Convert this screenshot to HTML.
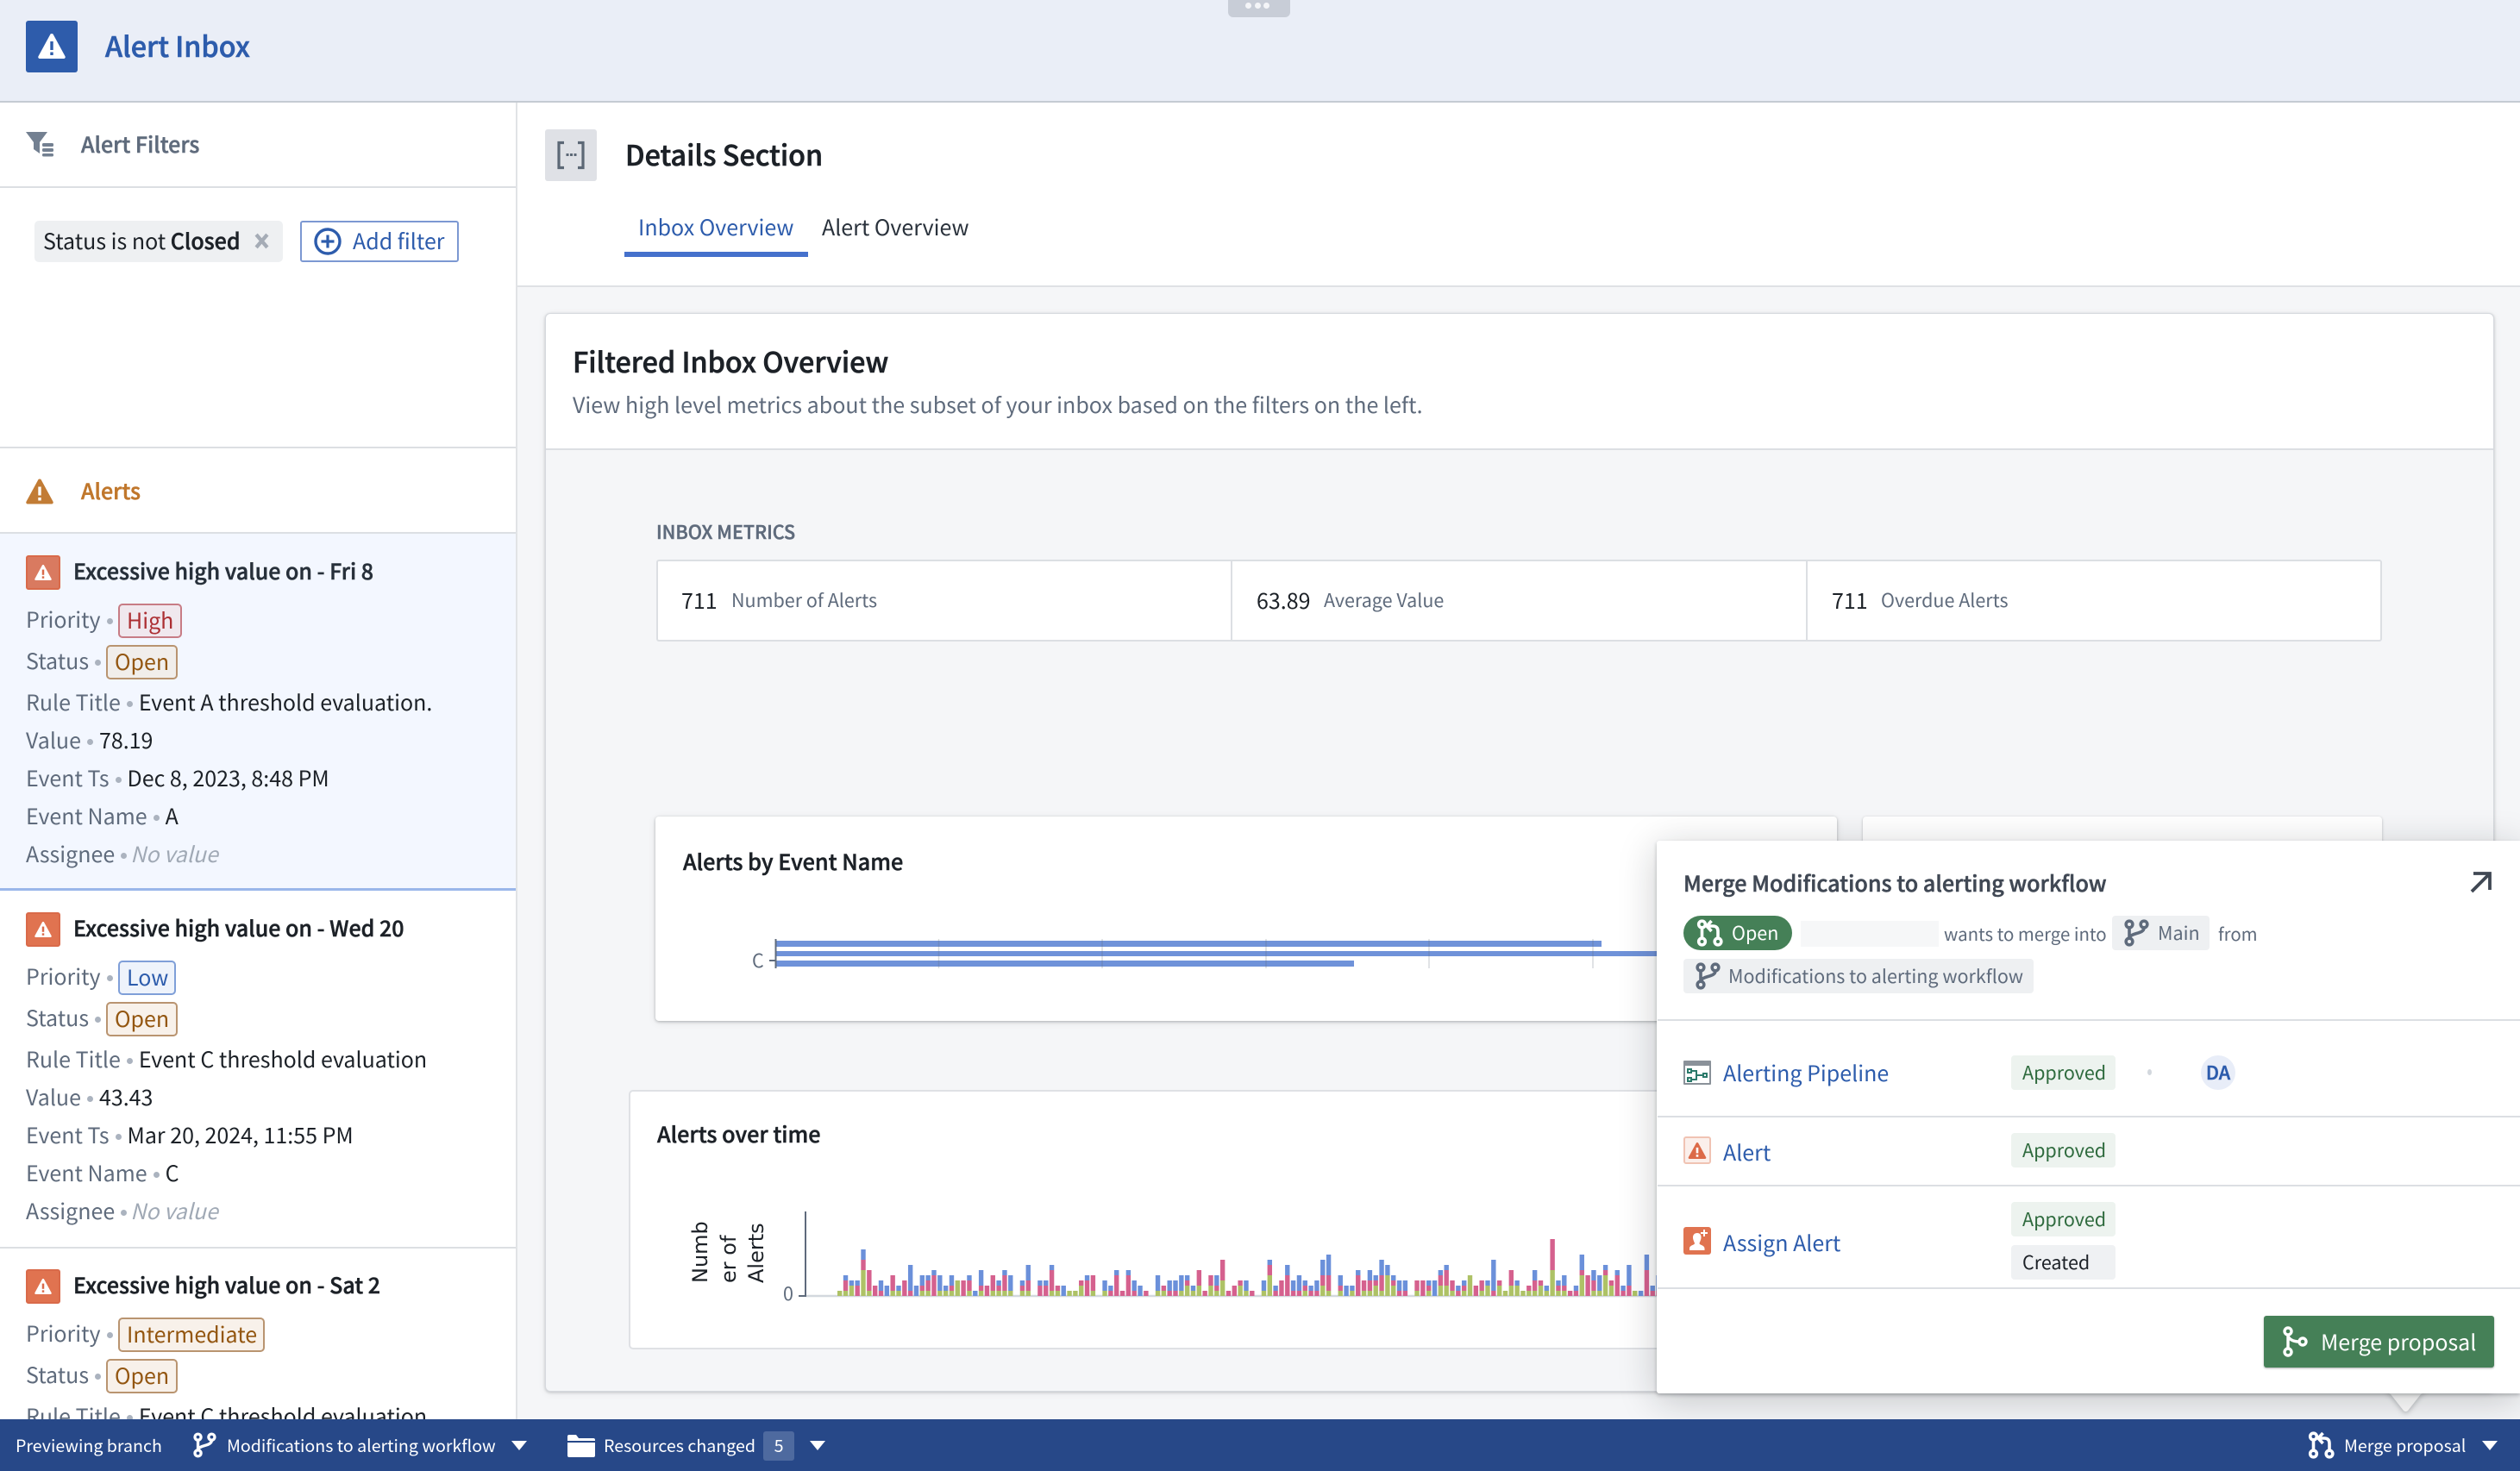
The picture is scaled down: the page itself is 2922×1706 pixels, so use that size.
<!DOCTYPE html>
<html><head><meta charset="utf-8"><title>Alert Inbox</title>
<style>
*{box-sizing:border-box}
html,body{margin:0;padding:0;width:2922px;height:1706px;overflow:hidden;background:#fff}
body{position:relative;font-family:"Noto Sans CJK JP","Liberation Sans",sans-serif;color:#1c2127;font-size:25px}
.a{position:absolute}
.t{position:absolute;white-space:nowrap;line-height:40px;height:40px;margin-top:-1px}
.s{font-size:21.500px}
.x{font-size:20.400px}
.b{font-size:19.600px}
.m{font-weight:500;-webkit-text-stroke:.5px currentColor}
.h{font-size:32.300px;font-weight:500;-webkit-text-stroke:.6px currentColor}
.l{color:#5f6b7c}
.d{display:inline-block;width:7px;height:7px;border-radius:50%;background:#abb3bf;margin:0 7px;vertical-align:4px}
.n{margin-left:-3px;color:#a0a9b5}
.tag{position:absolute;height:40px;border:2px solid;border-radius:5px;line-height:35px;padding-left:8px;white-space:nowrap}
.hi{color:#ac2f33;border-color:#c77c85;background:#f0e8ee}
.op{color:#935610;border-color:#b99470;background:#f8f1ea}
.lo{color:#2d5cac;border-color:#7f9fd8;background:#eef3fb}
.chip{position:absolute;height:40px;background:#eef0f2;border-radius:4px}
.ap{position:absolute;left:2332px;width:121px;height:40px;background:#edf3ef;color:#2f6b3e;font-size:21.500px;line-height:39px;padding-left:13px;border-radius:4px}
.hr{position:absolute;height:2px;background:#dcdfe3}
svg{position:absolute;overflow:visible}
</style></head><body>

<!-- header -->
<div class="a" style="left:0;top:0;width:2922px;height:119px;background:#eaeef7;border-bottom:2px solid #c5cbd3"></div>
<div class="a" style="left:1424px;top:0;width:72px;height:20px;background:#c8cdd7;border-radius:0 0 6px 6px"></div>
<div class="a" style="left:1444px;top:3px;width:7px;height:7px;background:#f4f5f8;border-radius:50%"></div>
<div class="a" style="left:1455px;top:3px;width:7px;height:7px;background:#f4f5f8;border-radius:50%"></div>
<div class="a" style="left:1465px;top:3px;width:7px;height:7px;background:#f4f5f8;border-radius:50%"></div>
<div class="a" style="left:30px;top:24px;width:60px;height:60px;background:#2e5cab;border-radius:3px"></div>
<svg style="left:44px;top:39px" width="32" height="29" viewBox="0 0 32 29"><path d="M16 0c.8 0 1.5.4 1.9 1.2l13.6 25c.7 1.3-.2 2.8-1.7 2.8H2.200C.7 29-.2 27.500.5 26.200l13.600-25C14.500.4 15.200 0 16 0z" fill="#fff"/><rect x="14.300" y="9" width="3.400" height="10" fill="#2e5cab"/><rect x="14.300" y="21.500" width="3.400" height="3.500" fill="#2e5cab"/></svg>
<div class="t h" style="left:122px;top:34px;color:#2d5cac">Alert Inbox</div>

<!-- sidebar -->
<div class="a" style="left:598px;top:119px;width:2px;height:1530px;background:#e1e3e6"></div>
<svg style="left:30px;top:153px" width="32" height="28" viewBox="0 0 32 28"><path d="M0 0h25l-9 12v13l-7-5v-8z" fill="#738091"/><rect x="19" y="13" width="13" height="4" rx="1.500" fill="#738091"/><rect x="19" y="19" width="13" height="4" rx="1.500" fill="#738091"/><rect x="19" y="25" width="13" height="3.500" rx="1.500" fill="#738091"/></svg>
<div class="t m" style="left:94px;top:148px;color:#5f6b7c">Alert Filters</div>
<div class="hr" style="left:0;top:216px;width:598px"></div>
<div class="a" style="left:40px;top:256px;width:288px;height:48px;background:#eef0f2;border-radius:5px"></div>
<div class="t" style="left:50px;top:260px">Status is not <span class="m">Closed</span></div>
<svg style="left:295px;top:271px" width="17" height="17" viewBox="0 0 16 16"><path d="M2 1l12 14M14 1L2 15" stroke="#a5acb6" stroke-width="4" fill="none"/></svg>
<div class="a" style="left:348px;top:256px;width:184px;height:48px;border:2px solid #7c98d2;border-radius:3px;background:#fff"></div>
<svg style="left:364px;top:264px" width="32" height="32" viewBox="0 0 32 32"><circle cx="16" cy="16" r="14" fill="none" stroke="#2d5cac" stroke-width="3.400"/><path d="M16 8.500v15M8.500 16h15" stroke="#2d5cac" stroke-width="3.200"/></svg>
<div class="t" style="left:409px;top:260px;color:#2d5cac">Add filter</div>
<div class="hr" style="left:0;top:518px;width:598px"></div>
<svg style="left:30px;top:555px" width="32" height="30" viewBox="0 0 32 29"><path d="M16 0c.8 0 1.500.4 1.900 1.200l13.600 25c.7 1.300-.2 2.800-1.700 2.800H2.200C.7 29-.2 27.500.5 26.200l13.600-25C14.500.4 15.200 0 16 0z" fill="#c27c35"/><rect x="14.300" y="9" width="3.400" height="10" fill="#fff"/><rect x="14.300" y="21.500" width="3.400" height="3.500" fill="#fff"/></svg>
<div class="t m" style="left:94px;top:550px;color:#c0772c">Alerts</div>
<div class="hr" style="left:0;top:617px;width:598px"></div>

<!-- item 1 -->
<div class="a" style="left:0;top:619px;width:598px;height:411px;background:#f3f7ff"></div>
<div class="a" style="left:0;top:1030px;width:598px;height:3px;background:#9ab6ea"></div>
<div class="a" style="left:30px;top:644px;width:40px;height:40px;background:#d97a60;border:2px solid #d96a4a;border-radius:3px"></div>
<svg style="left:40px;top:655px" width="20" height="18" viewBox="0 0 32 29"><path d="M16 0c.8 0 1.500.4 1.900 1.200l13.600 25c.7 1.300-.2 2.800-1.700 2.800H2.200C.7 29-.2 27.500.5 26.200l13.600-25C14.500.4 15.200 0 16 0z" fill="#fff"/><rect x="14" y="9" width="4" height="10" fill="#d96a4a"/><rect x="14" y="21.500" width="4" height="4" fill="#d96a4a"/></svg>
<div class="t m" style="left:85px;top:643px;color:#27303a">Excessive high value on - Fri 8</div>
<div class="t l" style="left:30px;top:699px">Priority<b class="d"></b></div>
<div class="tag hi" style="left:137px;top:700px;width:74px">High</div>
<div class="t l" style="left:30px;top:747px">Status<b class="d"></b></div>
<div class="tag op" style="left:123px;top:748px;width:83px;background:#f1eeeb">Open</div>
<div class="t" style="left:30px;top:795px"><span class="l">Rule Title</span><b class="d"></b>Event A threshold evaluation.</div>
<div class="t" style="left:30px;top:839px"><span class="l">Value</span><b class="d"></b>78.19</div>
<div class="t" style="left:30px;top:883px"><span class="l">Event Ts</span><b class="d"></b>Dec 8, 2023, 8:48 PM</div>
<div class="t" style="left:30px;top:927px"><span class="l">Event Name</span><b class="d"></b>A</div>
<div class="t" style="left:30px;top:971px"><span class="l">Assignee</span><b class="d"></b><i class="n">No value</i></div>

<!-- item 2 -->
<div class="a" style="left:30px;top:1058px;width:40px;height:40px;background:#e07350;border:2px solid #d96a4a;border-radius:3px"></div>
<svg style="left:40px;top:1069px" width="20" height="18" viewBox="0 0 32 29"><path d="M16 0c.8 0 1.500.4 1.900 1.200l13.600 25c.7 1.300-.2 2.800-1.700 2.800H2.200C.7 29-.2 27.500.5 26.200l13.600-25C14.500.4 15.200 0 16 0z" fill="#fff"/><rect x="14" y="9" width="4" height="10" fill="#d96a4a"/><rect x="14" y="21.500" width="4" height="4" fill="#d96a4a"/></svg>
<div class="t m" style="left:85px;top:1057px">Excessive high value on - Wed 20</div>
<div class="t l" style="left:30px;top:1113px">Priority<b class="d"></b></div>
<div class="tag lo" style="left:137px;top:1114px;width:67px">Low</div>
<div class="t l" style="left:30px;top:1161px">Status<b class="d"></b></div>
<div class="tag op" style="left:123px;top:1162px;width:83px">Open</div>
<div class="t" style="left:30px;top:1209px"><span class="l">Rule Title</span><b class="d"></b>Event C threshold evaluation</div>
<div class="t" style="left:30px;top:1253px"><span class="l">Value</span><b class="d"></b>43.43</div>
<div class="t" style="left:30px;top:1297px"><span class="l">Event Ts</span><b class="d"></b>Mar 20, 2024, 11:55 PM</div>
<div class="t" style="left:30px;top:1341px"><span class="l">Event Name</span><b class="d"></b>C</div>
<div class="t" style="left:30px;top:1385px"><span class="l">Assignee</span><b class="d"></b><i class="n">No value</i></div>
<div class="hr" style="left:0;top:1446px;width:598px"></div>

<!-- item 3 -->
<div class="a" style="left:30px;top:1472px;width:40px;height:40px;background:#e07350;border:2px solid #d96a4a;border-radius:3px"></div>
<svg style="left:40px;top:1483px" width="20" height="18" viewBox="0 0 32 29"><path d="M16 0c.8 0 1.500.4 1.900 1.200l13.600 25c.7 1.300-.2 2.800-1.700 2.800H2.200C.7 29-.2 27.500.5 26.200l13.600-25C14.500.4 15.200 0 16 0z" fill="#fff"/><rect x="14" y="9" width="4" height="10" fill="#d96a4a"/><rect x="14" y="21.500" width="4" height="4" fill="#d96a4a"/></svg>
<div class="t m" style="left:85px;top:1471px">Excessive high value on - Sat 2</div>
<div class="t l" style="left:30px;top:1527px">Priority<b class="d"></b></div>
<div class="tag op" style="left:137px;top:1528px;width:170px">Intermediate</div>
<div class="t l" style="left:30px;top:1575px">Status<b class="d"></b></div>
<div class="tag op" style="left:123px;top:1576px;width:83px">Open</div>
<div class="t" style="left:30px;top:1623px"><span class="l">Rule Title</span><b class="d"></b>Event C threshold evaluation</div>

<!-- details header -->
<div class="a" style="left:632px;top:150px;width:60px;height:60px;background:#dfe1e6;border-radius:3px"></div>
<svg style="left:646px;top:164px" width="32" height="32" viewBox="0 0 32 32" fill="none"><path d="M8 1.500H2v29h6M24 1.500h6v29h-6" stroke="#5c6876" stroke-width="3.200"/><rect x="10.500" y="14" width="3" height="3" fill="#5c6876"/><rect x="15" y="14" width="3" height="3" fill="#5c6876"/><rect x="19.500" y="14" width="3" height="3" fill="#5c6876"/></svg>
<div class="t h" style="left:725px;top:160px">Details Section</div>
<div class="t" style="left:740px;top:244px;color:#2d5cac">Inbox Overview</div>
<div class="t" style="left:953px;top:244px;color:#2a323c">Alert Overview</div>
<div class="a" style="left:724px;top:292px;width:213px;height:6px;background:#4571cc"></div>

<!-- main bg -->
<div class="a" style="left:600px;top:331px;width:2322px;height:1320px;background:#f5f6f8;border-top:2px solid #dfe1e5"></div>

<!-- big card -->
<div class="a" style="left:632px;top:363px;width:2260px;height:1251px;background:#f5f6f8;border-radius:6px;border:1px solid #d6d9de;box-shadow:0 1px 3px rgba(16,22,26,.2),0 2px 10px rgba(16,22,26,.06)"></div>
<div class="a" style="left:633px;top:364px;width:2258px;height:158px;background:#fff;border-radius:6px 6px 0 0;border-bottom:2px solid #dcdfe3"></div>
<div class="t h" style="left:664px;top:400px">Filtered Inbox Overview</div>
<div class="t" style="left:664px;top:450px;color:#5f6b7c;font-size:25.050px">View high level metrics about the subset of your inbox based on the filters on the left.</div>

<div class="t s m" style="left:761px;top:598px;color:#5f6b7c">INBOX METRICS</div>
<div class="a" style="left:761px;top:649px;width:2001px;height:95px;background:#fff;border:2px solid #dcdfe3;border-radius:3px"></div>
<div class="a" style="left:1427px;top:650px;width:2px;height:93px;background:#dcdfe3"></div>
<div class="a" style="left:2094px;top:650px;width:2px;height:93px;background:#dcdfe3"></div>
<div class="t" style="left:790px;top:677px">711</div>
<div class="t s l" style="left:848px;top:677px">Number of Alerts</div>
<div class="t" style="left:1457px;top:677px">63.89</div>
<div class="t s l" style="left:1535px;top:677px">Average Value</div>
<div class="t" style="left:2124px;top:677px">711</div>
<div class="t s l" style="left:2181px;top:677px">Overdue Alerts</div>

<!-- alerts by event -->
<div class="a" style="left:2160px;top:947px;width:602px;height:237px;background:#fff;border-radius:4px;box-shadow:0 1px 3px rgba(16,22,26,.25)"></div>
<div class="a" style="left:760px;top:947px;width:1370px;height:237px;background:#fff;border-radius:4px;box-shadow:0 1px 3px rgba(16,22,26,.28),0 2px 10px rgba(16,22,26,.08)"></div>
<div class="t m" style="left:792px;top:980px;font-size:25.200px">Alerts by Event Name</div>
<svg style="left:0;top:0" width="2922" height="1706">
<g fill="#6a8ed8" fill-opacity=".97"><rect x="900" y="1091" width="957" height="7"/><rect x="900" y="1103" width="1030" height="6"/><rect x="900" y="1114" width="670" height="7"/></g>
<g stroke="#5f6b7c" stroke-opacity=".25" stroke-width="1.500"><path d="M1088.500 1089v34M1278 1089v34M1468 1089v34M1657 1089v34M1847 1089v34"/></g>
<path d="M899.500 1089v34M892 1114h8" stroke="#5f6b7c" stroke-width="2"/>
</svg>
<div class="t s l" style="left:872px;top:1095px">C</div>

<!-- alerts over time -->
<div class="a" style="left:729px;top:1264px;width:1300px;height:301px;background:#fff;border:2px solid #dfe1e5;border-radius:5px"></div>
<div class="t m" style="left:762px;top:1296px;font-size:25.200px">Alerts over time</div>
<svg id="bars" style="left:0;top:0" width="2922" height="1706">
<path d="M934 1503h1000" stroke="#d3d8de" stroke-width="2.500"/>
<path d="M934 1405v99M926 1503h8" stroke="#5f6b7c" stroke-width="2"/>
<g font-family="'DejaVu Sans',sans-serif" font-size="24" fill="#1c2127">
<text transform="translate(820,1488) rotate(-90)">Numb</text>
<text transform="translate(853,1488) rotate(-90)">er of</text>
<text transform="translate(885,1488) rotate(-90)">Alerts</text>
</g>
</svg>
<div class="t s l" style="left:908px;top:1481px">0</div>
<script>
(function(){var d="100 121 201 021 522 140 020 012 002 130 101 030 015 002 112 121 041 103 101 112 300 030 121 001 113 020 130 111 131 103 000 111 123 000 021 021 141 110 002 100 100 210 031 130 000 102 011 041 010 041 012 002 010 000 103 110 012 012 103 211 101 230 010 220 112 340 010 020 210 102 010 000 102 421 011 030 042 012 013 111 011 012 223 134 000 112 002 101 041 120 122 211 133 402 211 012 012 000 120 030 111 003 221 231 120 011 111 400 020 120 201 016 210 100 230 201 100 110 122 210 101 560 111 112 010 011 413 040 122 103 411 210 041 011 024 100 001 053 011 013".split(" ");
var c=["#aec266","#d5618e","#6b90da"],s="";
d.forEach(function(v,i){var x=971+i*6.83,y=1503;for(var k=0;k<3;k++){var h=+v[k]*6;if(h){y-=h;s+='<rect x="'+x.toFixed(2)+'" y="'+y+'" width="5.400" height="'+h+'" fill="'+c[k]+'"/>';}}});
var e=document.getElementById("bars");e.insertAdjacentHTML("beforeend",s);})();
</script>

<!-- merge panel -->
<svg style="left:2766px;top:1614px;filter:drop-shadow(0 2px 3px rgba(16,22,26,.25));z-index:4" width="47" height="24" viewBox="0 0 47 24"><path d="M0 0h47l-6 3-15 19q-2.500 2-5 0L6 3z" fill="#fff"/></svg>
<div class="a" style="left:1921px;top:975px;width:1001px;height:641px;background:#fff;border-radius:3px 0 0 3px;box-shadow:0 2px 4px rgba(16,22,26,.25),0 8px 44px rgba(16,22,26,.22);z-index:5"></div>
<div class="a" style="left:0;top:0;width:2922px;height:1706px;z-index:6;pointer-events:none">
<div class="t m" style="left:1952px;top:1005px;color:#404854;font-size:25.150px">Merge Modifications to alerting workflow</div>
<svg style="left:2865px;top:1010px" width="24" height="24" viewBox="0 0 24 24" fill="none"><path d="M3 3h19v19M22 3L1 24" stroke="#404854" stroke-width="3.800"/></svg>

<div class="a" style="left:1952px;top:1062px;width:126px;height:40px;background:#458057;border-radius:20px"></div>
<svg style="left:1967px;top:1066px" width="32" height="32" viewBox="0 0 32 32" fill="none" stroke="#fff" stroke-width="3.600"><circle cx="6.500" cy="6" r="3.800"/><circle cx="6.500" cy="26" r="3.800"/><circle cx="25" cy="26" r="3.800"/><path d="M6.500 10v12M25 22v-8c0-4-2-6-6-6h-6M17.500 2l-5.500 6 5.500 6"/></svg>
<div class="t s" style="left:2008px;top:1063px;color:#fff">Open</div>
<div class="a" style="left:2088px;top:1068px;width:160px;height:30px;background:#f6f7f8"></div>
<div class="t x l" style="left:2254px;top:1063px">wants to merge into</div>
<div class="chip" style="left:2449px;top:1062px;width:113px"></div>
<svg style="left:2462px;top:1066px" width="30" height="32" viewBox="0 0 30 32" fill="none" stroke="#5f6b7c" stroke-width="3.600"><circle cx="7" cy="6" r="3.800"/><circle cx="7" cy="26" r="3.800"/><circle cx="24" cy="6" r="3.800"/><path d="M7 10v12M24 10c0 8-17 5-17 13"/></svg>
<div class="t s l" style="left:2502px;top:1063px">Main</div>
<div class="t x l" style="left:2572px;top:1063px">from</div>
<div class="chip" style="left:1952px;top:1112px;width:406px"></div>
<svg style="left:1965px;top:1116px" width="30" height="32" viewBox="0 0 30 32" fill="none" stroke="#5f6b7c" stroke-width="3.600"><circle cx="7" cy="6" r="3.800"/><circle cx="7" cy="26" r="3.800"/><circle cx="24" cy="6" r="3.800"/><path d="M7 10v12M24 10c0 8-17 5-17 13"/></svg>
<div class="t s l" style="left:2004px;top:1113px">Modifications to alerting workflow</div>
<div class="hr" style="left:1922px;top:1182px;width:1000px"></div>

<div class="a" style="left:1952px;top:1230px;width:32px;height:28px;background:#fff;border:2px solid #8a9199;border-top-width:6px;border-radius:1px"></div>
<svg style="left:1955px;top:1238px" width="26" height="18" viewBox="0 0 26 18" fill="none" stroke="#2b7a6b" stroke-width="2"><rect x="2" y="2" width="4" height="4"/><rect x="2" y="12" width="4" height="4"/><rect x="20" y="7" width="4" height="4"/><path d="M6 4h6v10H6M12 9h8"/></svg>
<div class="t" style="left:1998px;top:1225px;color:#2d5cac">Alerting Pipeline</div>
<div class="ap" style="top:1224px">Approved</div>
<div class="a" style="left:2490px;top:1240px;width:5px;height:7px;background:#d3d8de;border-radius:50%"></div>
<div class="a m" style="left:2552px;top:1224px;width:40px;height:40px;background:#e8edf8;border-radius:50%;text-align:center;font-size:21.500px;line-height:39px;color:#2d5cac">DA</div>
<div class="hr" style="left:1922px;top:1294px;width:1000px"></div>

<div class="a" style="left:1952px;top:1318px;width:32px;height:32px;background:#fbefeb;border:2px solid #f0c3b3;border-radius:3px"></div>
<svg style="left:1957px;top:1325px" width="22" height="19" viewBox="0 0 32 29"><path d="M16 0c.8 0 1.500.4 1.900 1.200l13.600 25c.7 1.300-.2 2.800-1.700 2.800H2.200C.7 29-.2 27.500.5 26.200l13.600-25C14.500.4 15.200 0 16 0z" fill="#dc6a48"/><rect x="14" y="9" width="4" height="10" fill="#fff"/><rect x="14" y="21.500" width="4" height="4" fill="#fff"/></svg>
<div class="t" style="left:1998px;top:1317px;color:#2d5cac">Alert</div>
<div class="ap" style="top:1314px">Approved</div>
<div class="hr" style="left:1922px;top:1374px;width:1000px"></div>

<div class="a" style="left:1952px;top:1423px;width:32px;height:32px;background:#e07350;border-radius:3px"></div>
<svg style="left:1955px;top:1426px" width="26" height="26" viewBox="0 0 26 26" fill="#fff"><path d="M13 4c3 0 4.500 2 4.500 5 0 3-1.500 5-2 7 0 2 6 2 6 6v2H4v-2c0-4 6-4 6-6-.5-2-2-4-2-7 0-3 2-5 5-5z"/><path d="M20 0h2v3h3v2h-3v3h-2V5h-3V3h3z"/></svg>
<div class="t" style="left:1998px;top:1422px;color:#2d5cac">Assign Alert</div>
<div class="ap" style="top:1394px">Approved</div>
<div class="ap" style="top:1444px;background:#eff1f3;color:#1c2127">Created</div>
<div class="hr" style="left:1922px;top:1493px;width:1000px"></div>

<div class="a" style="left:2625px;top:1526px;width:267px;height:60px;background:#458057;border-radius:3px;box-shadow:0 1px 2px rgba(16,22,26,.35)"></div>
<svg style="left:2646px;top:1538px" width="30" height="36" viewBox="0 0 30 36" fill="none" stroke="#fff" stroke-width="3.400"><circle cx="7" cy="6" r="4"/><circle cx="7" cy="30" r="4"/><circle cx="24" cy="18" r="4"/><path d="M7 10v16M7 10c0 5 6 8 13 8"/></svg>
<div class="t" style="left:2691px;top:1537px;color:#fff">Merge proposal</div>
</div>

<!-- bottom bar -->
<div class="a" style="left:0;top:1646px;width:2922px;height:60px;background:#274888;z-index:7"></div>
<div class="a" style="left:0;top:0;width:2922px;height:1706px;z-index:8;color:#fff">
<div class="t b" style="left:18px;top:1657px">Previewing branch</div>
<svg style="left:223px;top:1660px" width="28" height="32" viewBox="0 0 30 32" fill="none" stroke="#fff" stroke-width="3.600"><circle cx="7" cy="6" r="3.800"/><circle cx="7" cy="26" r="3.800"/><circle cx="24" cy="6" r="3.800"/><path d="M7 10v12M24 10c0 8-17 5-17 13"/></svg>
<div class="t b" style="left:263px;top:1657px">Modifications to alerting workflow</div>
<svg style="left:593px;top:1671px" width="18" height="11" viewBox="0 0 18 11"><path d="M0 0h18L9 11z" fill="#fff"/></svg>
<svg style="left:658px;top:1664px" width="32" height="26" viewBox="0 0 32 26"><path d="M0 2q0-2 2-2h8l3 4h17q2 0 2 2v1H0zM0 9h32v15q0 2-2 2H2q-2 0-2-2z" fill="#fff"/></svg>
<div class="t b" style="left:700px;top:1657px">Resources changed</div>
<div class="a b" style="left:885px;top:1660px;width:36px;height:34px;background:#4e6a9f;border-radius:3px;text-align:center;line-height:32px">5</div>
<svg style="left:939px;top:1671px" width="18" height="11" viewBox="0 0 18 11"><path d="M0 0h18L9 11z" fill="#fff"/></svg>
<svg style="left:2676px;top:1660px" width="32" height="32" viewBox="0 0 32 32" fill="none" stroke="#fff" stroke-width="3.600"><circle cx="6.500" cy="6" r="3.800"/><circle cx="6.500" cy="26" r="3.800"/><circle cx="25" cy="26" r="3.800"/><path d="M6.500 10v12M25 22v-8c0-4-2-6-6-6h-6M17.500 2l-5.500 6 5.500 6"/></svg>
<div class="t b" style="left:2718px;top:1657px">Merge proposal</div>
<svg style="left:2878px;top:1671px" width="18" height="11" viewBox="0 0 18 11"><path d="M0 0h18L9 11z" fill="#fff"/></svg>
</div>
</body></html>
